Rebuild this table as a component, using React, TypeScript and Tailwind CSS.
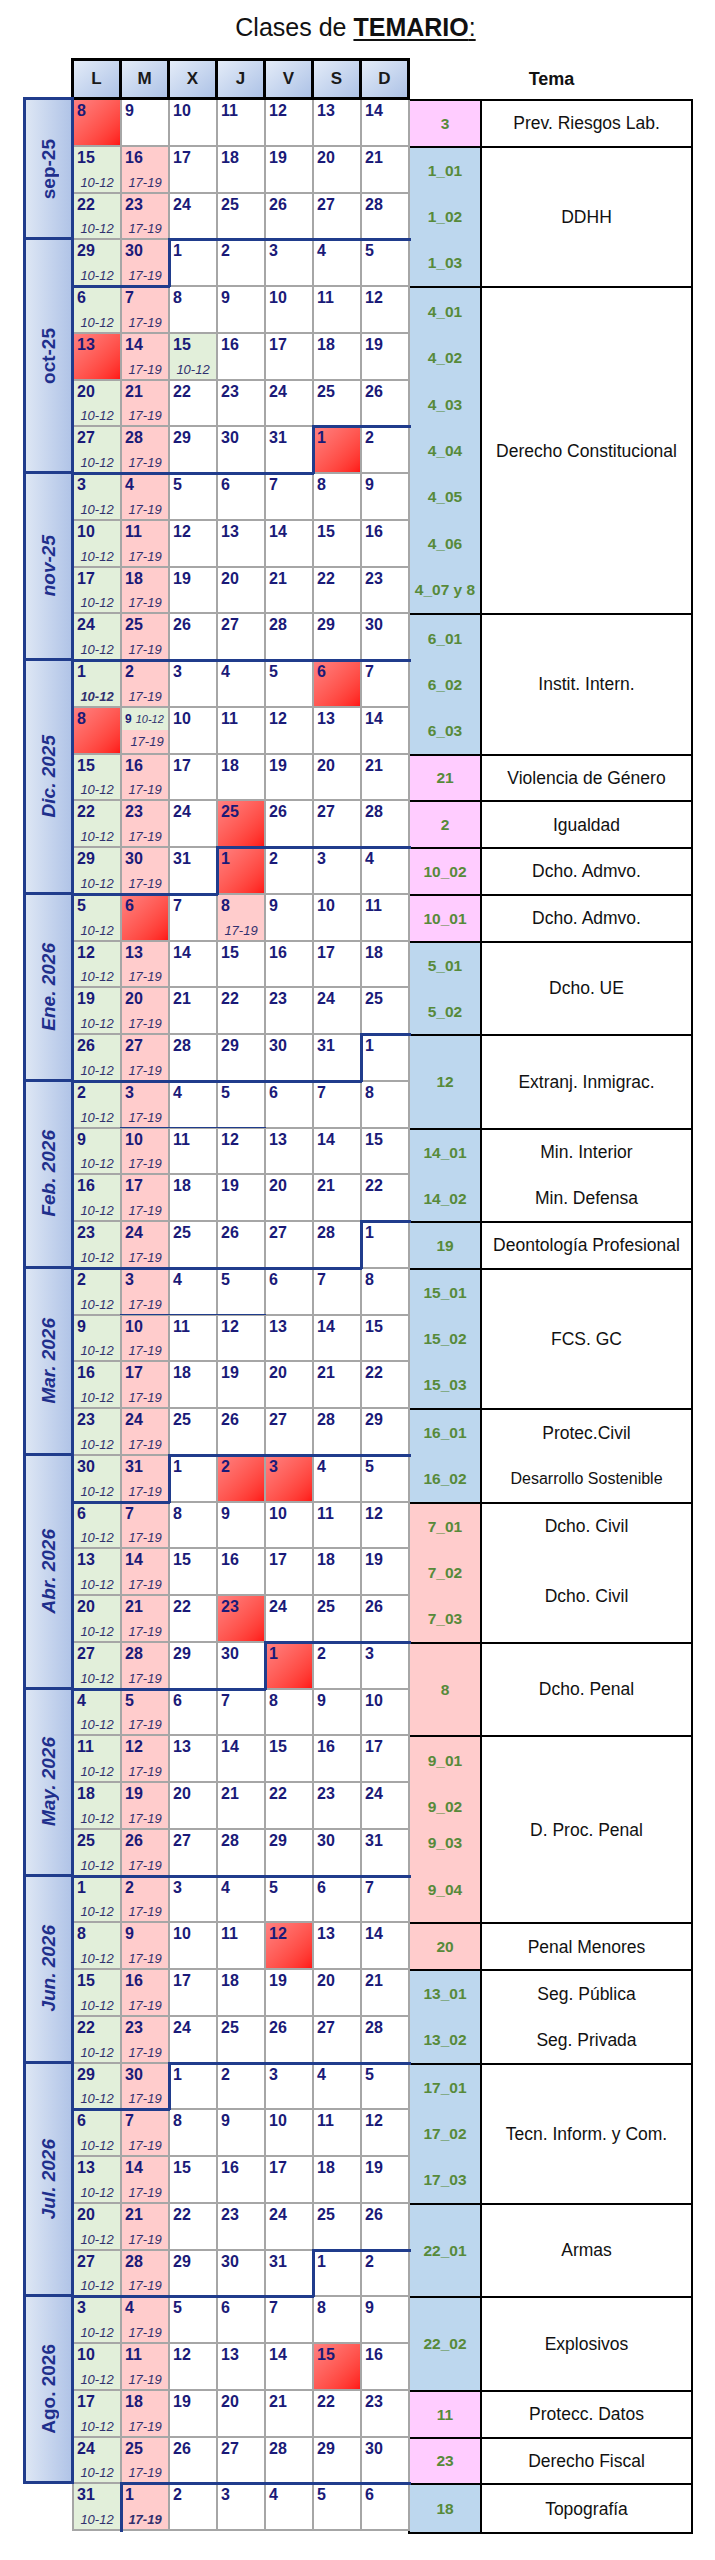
import React from "react";

const ROW_H = 46.75;
const START = Date.UTC(2025, 8, 8);
const DAY_MS = 86400000;

type Kind = "white" | "green" | "pink" | "red" | "split";
interface Cell {
  day: number;
  month: number;
  kind: Kind;
  time?: string;
  bold?: boolean;
}

function buildWeeks(): Cell[][] {
  const weeks: Cell[][] = [];
  for (let w = 0; w < 52; w++) {
    const row: Cell[] = [];
    for (let c = 0; c < 7; c++) {
      const d = new Date(START + (w * 7 + c) * DAY_MS);
      row.push({
        day: d.getUTCDate(),
        month: d.getUTCFullYear() * 12 + d.getUTCMonth(),
        kind: "white",
      });
    }
    if (w > 0) {
      row[0].kind = "green";
      row[0].time = "10-12";
      row[1].kind = "pink";
      row[1].time = "17-19";
    }
    weeks.push(row);
  }
  const red = (w: number, c: number) => {
    weeks[w][c].kind = "red";
    weeks[w][c].time = undefined;
  };
  red(0, 0);
  red(5, 0);
  red(7, 5);
  red(12, 5);
  red(13, 0);
  red(15, 3);
  red(16, 3);
  red(17, 1);
  red(29, 3);
  red(29, 4);
  red(32, 3);
  red(33, 4);
  red(39, 4);
  red(48, 5);
  weeks[5][2].kind = "green";
  weeks[5][2].time = "10-12";
  weeks[13][1].kind = "split";
  weeks[17][3].kind = "pink";
  weeks[17][3].time = "17-19";
  weeks[12][0].bold = true;
  weeks[51][1].bold = true;
  return weeks;
}

const WEEKS = buildWeeks();

const DAYS = ["L", "M", "X", "J", "V", "S", "D"];

const MONTHS = [
  { label: "sep-25", rows: 3, italic: false },
  { label: "oct-25", rows: 5, italic: false },
  { label: "nov-25", rows: 4, italic: true },
  { label: "Dic. 2025", rows: 5, italic: true },
  { label: "Ene. 2026", rows: 4, italic: true },
  { label: "Feb. 2026", rows: 4, italic: true },
  { label: "Mar. 2026", rows: 4, italic: true },
  { label: "Abr. 2026", rows: 5, italic: true },
  { label: "May. 2026", rows: 4, italic: true },
  { label: "Jun. 2026", rows: 4, italic: true },
  { label: "Jul. 2026", rows: 5, italic: true },
  { label: "Ago. 2026", rows: 4, italic: false },
];

type Bg = "blue" | "pink" | "salmon";
interface Block {
  rows: number;
  bg: Bg;
  codes: string[];
  descs: { t: string; rows: number; small?: boolean }[];
}

const BLOCKS: Block[] = [
  { rows: 1, bg: "pink", codes: ["3"], descs: [{ t: "Prev. Riesgos Lab.", rows: 1 }] },
  { rows: 3, bg: "blue", codes: ["1_01", "1_02", "1_03"], descs: [{ t: "DDHH", rows: 3 }] },
  {
    rows: 7,
    bg: "blue",
    codes: ["4_01", "4_02", "4_03", "4_04", "4_05", "4_06", "4_07 y 8"],
    descs: [{ t: "Derecho Constitucional", rows: 7 }],
  },
  { rows: 3, bg: "blue", codes: ["6_01", "6_02", "6_03"], descs: [{ t: "Instit. Intern.", rows: 3 }] },
  { rows: 1, bg: "pink", codes: ["21"], descs: [{ t: "Violencia de Género", rows: 1 }] },
  { rows: 1, bg: "pink", codes: ["2"], descs: [{ t: "Igualdad", rows: 1 }] },
  { rows: 1, bg: "pink", codes: ["10_02"], descs: [{ t: "Dcho. Admvo.", rows: 1 }] },
  { rows: 1, bg: "pink", codes: ["10_01"], descs: [{ t: "Dcho. Admvo.", rows: 1 }] },
  { rows: 2, bg: "blue", codes: ["5_01", "5_02"], descs: [{ t: "Dcho. UE", rows: 2 }] },
  { rows: 2, bg: "blue", codes: ["12"], descs: [{ t: "Extranj. Inmigrac.", rows: 2 }] },
  {
    rows: 2,
    bg: "blue",
    codes: ["14_01", "14_02"],
    descs: [
      { t: "Min. Interior", rows: 1 },
      { t: "Min. Defensa", rows: 1 },
    ],
  },
  { rows: 1, bg: "blue", codes: ["19"], descs: [{ t: "Deontología Profesional", rows: 1 }] },
  { rows: 3, bg: "blue", codes: ["15_01", "15_02", "15_03"], descs: [{ t: "FCS. GC", rows: 3 }] },
  {
    rows: 2,
    bg: "blue",
    codes: ["16_01", "16_02"],
    descs: [
      { t: "Protec.Civil", rows: 1 },
      { t: "Desarrollo Sostenible", rows: 1, small: true },
    ],
  },
  {
    rows: 3,
    bg: "salmon",
    codes: ["7_01", "7_02", "7_03"],
    descs: [
      { t: "Dcho. Civil", rows: 1 },
      { t: "Dcho. Civil", rows: 2 },
    ],
  },
  { rows: 2, bg: "salmon", codes: ["8"], descs: [{ t: "Dcho. Penal", rows: 2 }] },
  {
    rows: 4,
    bg: "salmon",
    codes: ["9_01", "9_02", "9_03", "9_04"],
    descs: [{ t: "D. Proc. Penal", rows: 4 }],
  },
  { rows: 1, bg: "salmon", codes: ["20"], descs: [{ t: "Penal Menores", rows: 1 }] },
  {
    rows: 2,
    bg: "blue",
    codes: ["13_01", "13_02"],
    descs: [
      { t: "Seg. Pública", rows: 1 },
      { t: "Seg. Privada", rows: 1 },
    ],
  },
  {
    rows: 3,
    bg: "blue",
    codes: ["17_01", "17_02", "17_03"],
    descs: [{ t: "Tecn. Inform. y Com.", rows: 3 }],
  },
  { rows: 2, bg: "blue", codes: ["22_01"], descs: [{ t: "Armas", rows: 2 }] },
  { rows: 2, bg: "blue", codes: ["22_02"], descs: [{ t: "Explosivos", rows: 2 }] },
  { rows: 1, bg: "pink", codes: ["11"], descs: [{ t: "Protecc. Datos", rows: 1 }] },
  { rows: 1, bg: "pink", codes: ["23"], descs: [{ t: "Derecho Fiscal", rows: 1 }] },
  { rows: 1, bg: "blue", codes: ["18"], descs: [{ t: "Topografía", rows: 1 }] },
];

const SHIFTED = new Set(["9_03", "9_04"]);

function DayCell({
  cell,
  top,
  left,
  thin,
}: {
  cell: Cell;
  top: boolean;
  left: boolean;
  thin: boolean;
}) {
  let bg = "bg-white";
  if (cell.kind === "green") bg = "bg-[#e2efda]";
  else if (cell.kind === "pink" || cell.kind === "split") bg = "bg-[#ffcccc]";
  else if (cell.kind === "red") bg = "bg-linear-to-br from-[#ff8080] to-[#ff1414]";

  return (
    <div
      className={`relative flex h-[46.75px] w-[48px] shrink-0 flex-col border-r-2 border-b-2 border-[#a6a6a6] ${bg}`}
    >
      {cell.kind === "split" ? (
        <>
          <div className="flex h-[22px] items-center gap-[4px] bg-[#e2efda] pl-[3px] text-[#1a1a78]">
            <span className="text-[12px] leading-[14px] font-bold">{cell.day}</span>
            <span className="text-[11px] leading-[14px] italic text-[#30306e]">10-12</span>
          </div>
          <div className="flex flex-1 items-center justify-center pl-[4px] text-[13px] leading-[15px] italic text-[#30306e]">
            17-19
          </div>
        </>
      ) : (
        <>
          <span className="pt-[2px] pl-[3px] text-[16px] leading-[18px] font-bold text-[#1a1a78]">
            {cell.day}
          </span>
          {cell.time && (
            <span
              className={`mt-auto pb-[2px] text-center text-[13px] leading-[15px] italic text-[#30306e] ${
                cell.bold ? "font-bold" : ""
              }`}
            >
              {cell.time}
            </span>
          )}
        </>
      )}
      {top && <div className="absolute -top-[2px] -right-[3px] -left-[2px] h-[3px] bg-[#203c8c]" />}
      {left && <div className="absolute -top-[2px] -bottom-[3px] -left-[2px] w-[3px] bg-[#203c8c]" />}
      {thin && <div className="absolute -right-[2px] -bottom-[1px] -left-[2px] h-[1px] bg-[#203c8c]" />}
    </div>
  );
}

function CalendarGrid() {
  return (
    <div className="flex w-[336px] shrink-0 flex-col">
      {WEEKS.map((row, w) => (
        <div key={w} className="flex">
          {row.map((cell, c) => {
            const top = w > 0 && WEEKS[w - 1][c].month !== cell.month;
            const left = c > 0 && row[c - 1].month !== cell.month;
            const thin = (w === 21 || w === 25) && c >= 1 && c <= 3;
            return <DayCell key={c} cell={cell} top={top} left={left} thin={thin} />;
          })}
        </div>
      ))}
    </div>
  );
}

function MonthColumn() {
  return (
    <div className="-mt-[3px] flex w-[51px] shrink-0 flex-col">
      {MONTHS.map((m, i) => (
        <div
          key={m.label}
          className={`flex items-center justify-center border-x-[3px] border-b-[3px] border-[#203c8c] bg-linear-to-r from-[#dde6f4] to-[#b1c4e7] ${
            i === 0 ? "border-t-[3px]" : ""
          }`}
          style={{ height: m.rows * ROW_H + (i === 0 ? 3 : 0) }}
        >
          <span
            className={`rotate-180 text-[19px] leading-[22px] font-bold whitespace-nowrap text-[#1f2f8c] [writing-mode:vertical-rl] ${
              m.italic ? "italic" : ""
            }`}
          >
            {m.label}
          </span>
        </div>
      ))}
      <div className="border-r-2 border-[#a6a6a6]" style={{ height: ROW_H }} />
    </div>
  );
}

function TemaTable() {
  return (
    <div className="-mt-[1px] -ml-[2px] flex w-[285px] shrink-0 flex-col border-2 border-black">
      {BLOCKS.map((b, i) => {
        let bg = "bg-[#bdd7ee]";
        if (b.bg === "pink") bg = "bg-[#ffccff]";
        else if (b.bg === "salmon") bg = "bg-[#ffcccc]";
        const last = i === BLOCKS.length - 1;
        return (
          <div
            key={i}
            className={`flex ${last ? "" : "border-b-2 border-black"}`}
            style={{ height: b.rows * ROW_H }}
          >
            <div className={`flex w-[72px] shrink-0 flex-col border-r-2 border-black ${bg}`}>
              {b.codes.map((c) => (
                <div
                  key={c}
                  className={`flex flex-1 items-center justify-center text-[15.5px] font-bold text-[#578a3a] ${
                    SHIFTED.has(c) ? "-translate-y-[10px]" : ""
                  }`}
                >
                  {c}
                </div>
              ))}
            </div>
            <div className="flex flex-1 flex-col bg-white">
              {b.descs.map((d, j) => (
                <div
                  key={j}
                  className={`flex items-center justify-center text-center text-[#111111] ${
                    d.small ? "text-[16px]" : "text-[17.5px]"
                  }`}
                  style={{ flex: `${d.rows} 1 0px` }}
                >
                  {d.t}
                </div>
              ))}
            </div>
          </div>
        );
      })}
    </div>
  );
}

export default function App() {
  return (
    <div className="w-[715px] bg-white pb-[26px] [font-family:'Liberation_Sans',Arial,sans-serif] text-[#111111]">
      <div className="flex h-[58px] justify-center pt-[12px] pr-[4px] text-[25px] leading-[30px]">
        <span className="whitespace-pre">Clases de </span>
        <span className="underline decoration-[2px] underline-offset-[3px]">
          <span className="font-bold">TEMARIO</span>:
        </span>
      </div>
      <div className="flex h-[42px]">
        <div className="w-[71px] shrink-0" />
        <div className="flex w-[339px] shrink-0 border-[3px] border-black">
          {DAYS.map((d, i) => (
            <div
              key={d}
              className={`flex flex-1 items-center justify-center bg-linear-to-br from-[#e4ecf8] to-[#adc2e6] text-[17px] font-bold text-[#1a1a1a] ${
                i > 0 ? "border-l-[3px] border-black" : ""
              }`}
            >
              {d}
            </div>
          ))}
        </div>
        <div className="flex w-[283px] shrink-0 items-center justify-center text-[18px] font-bold">
          Tema
        </div>
      </div>
      <div className="flex items-start">
        <div className="w-[23px] shrink-0" />
        <MonthColumn />
        <CalendarGrid />
        <TemaTable />
      </div>
    </div>
  );
}
